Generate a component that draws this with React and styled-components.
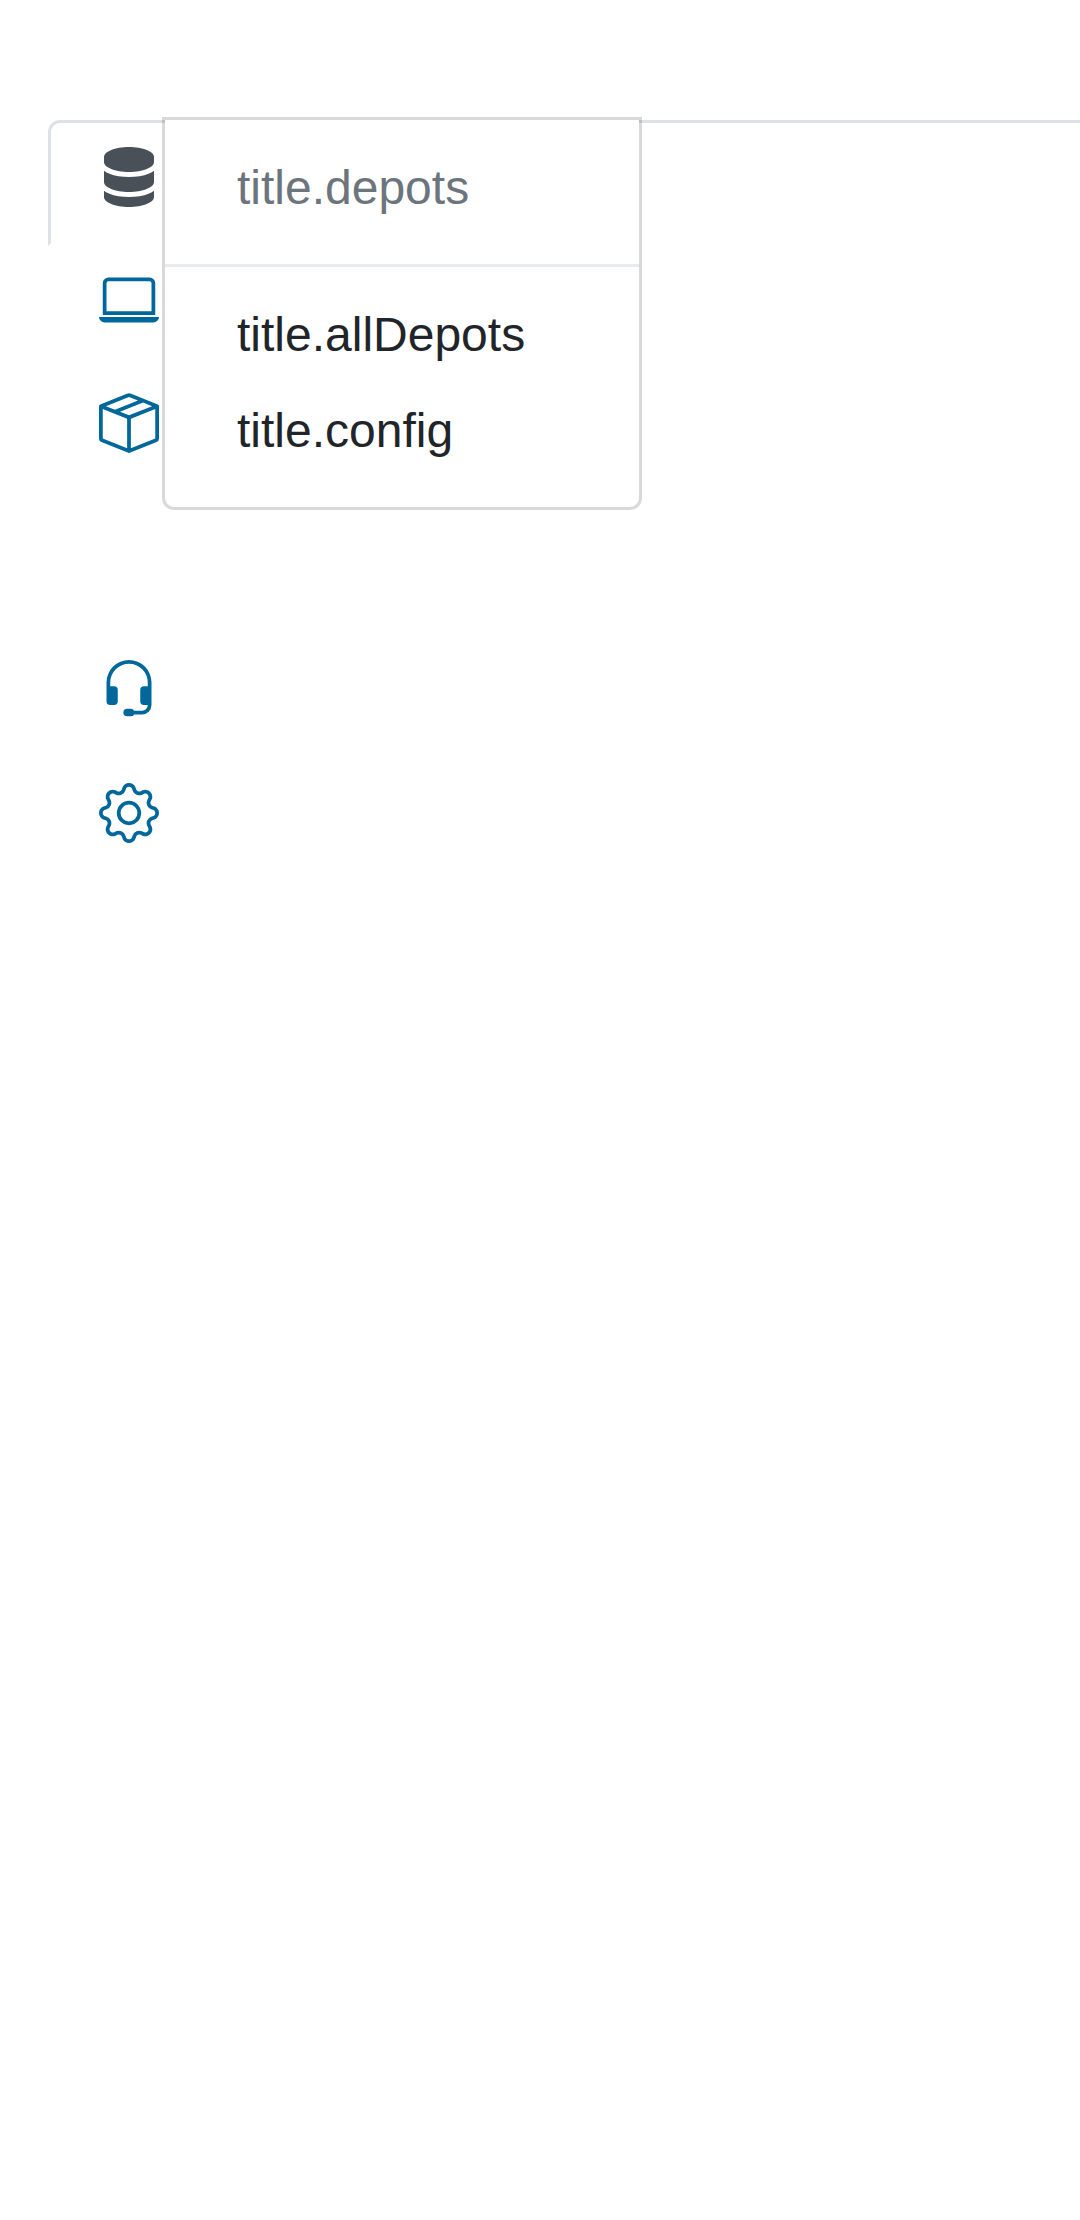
import React from "react";
import styled, { createGlobalStyle } from "styled-components";
import { BsServer, BsLaptop, BsBoxSeam, BsHeadset, BsGear } from "react-icons/bs";

const GlobalStyle = createGlobalStyle`
  *, *::before, *::after { box-sizing: border-box; }
  body {
    margin: 0;
    background: #fff;
    color: #212529;
    font-family: "Liberation Sans", Arial, sans-serif;
    font-size: 48px;
    line-height: 72px;
  }
`;

const Page = styled.div`
  min-height: 2220px;
  padding: 120px 0 0 48px;
  overflow: hidden;
`;

const Sidebar = styled.nav`
  display: flex;
  flex-direction: column;
  gap: 144px;
`;

const NavGroup = styled.ul`
  display: flex;
  flex-direction: column;
  margin: 0;
  padding: 0;
  list-style: none;
`;

const NavItem = styled.li`
  position: relative;
  height: 123px;
`;

const NavLink = styled.a`
  display: block;
  height: 126px;
  margin-right: -48px;
  padding: 24px 48px;
  border: 3px solid transparent;
  border-color: ${(p) => (p.$active ? "#dee2e6 #dee2e6 transparent" : "transparent")};
  border-radius: 12px 12px 0 0;
  color: ${(p) => (p.$active ? "#495057" : "#00679b")};
  cursor: pointer;

  svg {
    display: block;
    width: 60px;
    height: 60px;
  }
`;

const Menu = styled.ul`
  position: absolute;
  top: -3px;
  left: 114px;
  width: 480px;
  margin: 0;
  padding: 24px 0;
  list-style: none;
  background: #fff;
  background-clip: padding-box;
  border: 3px solid rgba(0, 0, 0, 0.15);
  border-radius: 0 0 12px 12px;
`;

const MenuItem = styled.li`
  height: 96px;
  padding: 8px 72px 16px;
  white-space: nowrap;
  color: ${(p) => (p.$disabled ? "#6c757d" : "#212529")};
`;

const Divider = styled.li`
  height: 3px;
  margin: 24px 0;
  background: #e9ecef;
`;

export default function App() {
  return (
    <>
      <GlobalStyle />
      <Page>
        <Sidebar>
          <NavGroup>
            <NavItem>
              <NavLink $active><BsServer /></NavLink>
              <Menu>
                <MenuItem $disabled>title.depots</MenuItem>
                <Divider />
                <MenuItem>title.allDepots</MenuItem>
                <MenuItem>title.config</MenuItem>
              </Menu>
            </NavItem>
            <NavItem>
              <NavLink><BsLaptop /></NavLink>
            </NavItem>
            <NavItem>
              <NavLink><BsBoxSeam /></NavLink>
            </NavItem>
          </NavGroup>
          <NavGroup>
            <NavItem>
              <NavLink><BsHeadset /></NavLink>
            </NavItem>
            <NavItem>
              <NavLink><BsGear /></NavLink>
            </NavItem>
          </NavGroup>
        </Sidebar>
      </Page>
    </>
  );
}
